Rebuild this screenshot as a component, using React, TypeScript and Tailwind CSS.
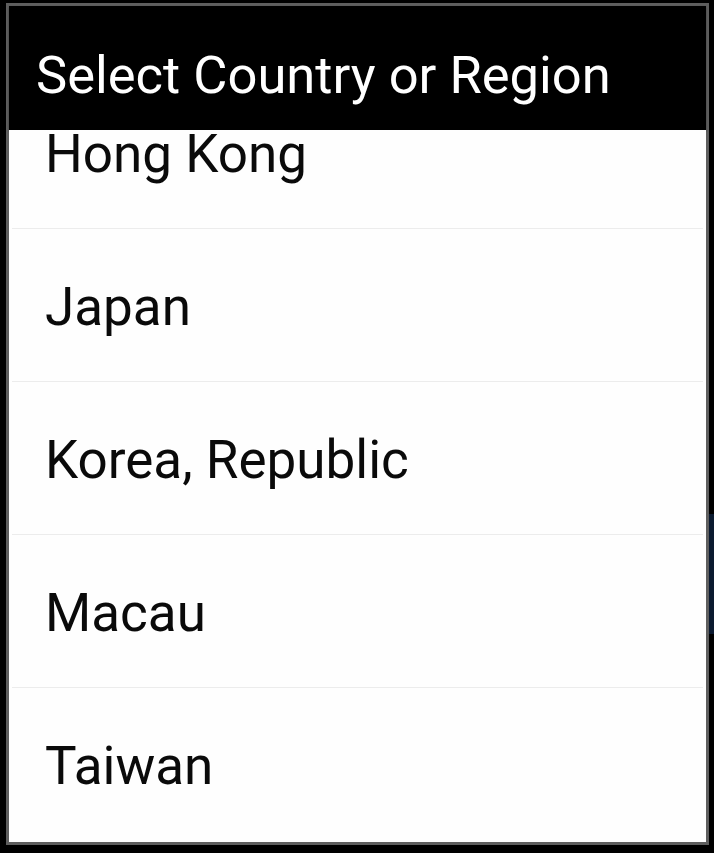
import React from "react";

const countries = ["Hong Kong", "Japan", "Korea, Republic", "Macau", "Taiwan"];

export default function App() {
  return (
    <div
      className="flex h-[853px] w-[714px] overflow-hidden bg-black"
      style={{ fontFamily: "Roboto, 'Noto Sans', sans-serif" }}
    >
      <div className="ml-[6px] mt-[3px] flex h-[842px] w-[703px] shrink-0 flex-col border-[3px] border-[#5e5e5e] bg-white">
        <div className="flex h-[124px] shrink-0 items-center bg-black pl-[27px] pt-[14px] shadow-[0_1px_2px_rgba(0,0,0,0.35)]">
          <h1 className="text-[52.5px] leading-[61px] font-normal text-white">Select Country or Region</h1>
        </div>
        <div className="h-[712px] overflow-hidden bg-[#fefefe]">
          <ul className="-mt-[54px]">
            {countries.map((name, i) => (
              <li key={name} className="mx-[3px]">
                <div className="flex h-[152px] items-center pl-[33px] pt-[4px] text-[53px] leading-[61px] text-[#0a0a0a]">
                  {name}
                </div>
                {i < countries.length - 1 && <div className="h-px bg-[#ececec]" />}
              </li>
            ))}
          </ul>
        </div>
      </div>
      <div className="flex w-[5px] flex-col">
        <div className="h-[514px]" />
        <div className="h-[120px] bg-[#0b1a30]" />
      </div>
    </div>
  );
}
